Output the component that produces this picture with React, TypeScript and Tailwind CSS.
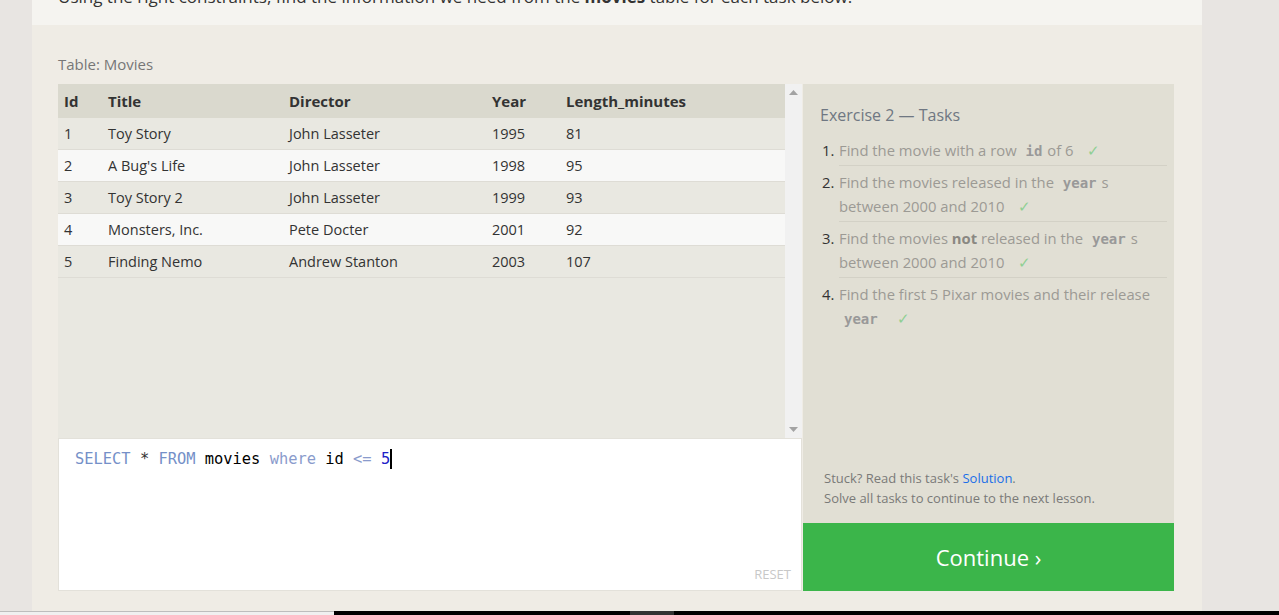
import React from "react";

const rows = [
  ["1", "Toy Story", "John Lasseter", "1995", "81"],
  ["2", "A Bug's Life", "John Lasseter", "1998", "95"],
  ["3", "Toy Story 2", "John Lasseter", "1999", "93"],
  ["4", "Monsters, Inc.", "Pete Docter", "2001", "92"],
  ["5", "Finding Nemo", "Andrew Stanton", "2003", "107"],
];

function Code({ children }: { children: React.ReactNode }) {
  return (
    <span className="font-['DejaVu_Sans_Mono',monospace] font-bold text-[14px] leading-none text-[#999] px-[5px]">
      {children}
    </span>
  );
}

function Check() {
  return <span className="text-[#8fcf93] ml-[10px] leading-none">✓</span>;
}

function Task({ n, children, last }: { n: number; children: React.ReactNode; last?: boolean }) {
  return (
    <li className="flex">
      <span className="w-[17px] shrink-0 text-[#333] pt-[4px]">{n}.</span>
      <div className={"flex-1 pt-[4px] pb-[3px] text-[#9c9a94] " + (last ? "" : "border-b border-[#d3d1c6]")}>
        {children}
      </div>
    </li>
  );
}

export default function App() {
  return (
    <div className="w-[1279px] h-[615px] overflow-hidden bg-[#e8e5e2] flex flex-col font-['Open_Sans',sans-serif]">
      <div className="flex-1 flex min-h-0">
        <div className="ml-[32px] w-[1170px] bg-[#efece5] flex flex-col">
          <div className="h-[25px] bg-[#f5f4f0] overflow-hidden px-[26px]">
            <p className="-mt-[16px] text-[17px] text-[#333] whitespace-nowrap">
              Using the right constraints, find the information we need from the <b>movies</b> table for each task below.
            </p>
          </div>
          <div className="pl-[26px] pr-[28px] pt-[29px] pb-[20px] flex-1 flex flex-col">
            <div className="text-[15px] leading-[20px] text-[#777]">Table: Movies</div>
            <div className="mt-[10px] flex gap-[1px]">
              {/* left column */}
              <div className="w-[744px] flex flex-col">
                <div className="h-[354px] bg-[#e9e8e1] flex">
                  <div className="flex-1 text-[#333]">
                    <div className="flex h-[34px] items-center bg-[#dad9ce] font-bold text-[15px]">
                      <div className="w-[44px] pl-[6px]">Id</div>
                      <div className="w-[181px] pl-[6px]">Title</div>
                      <div className="w-[203px] pl-[6px]">Director</div>
                      <div className="w-[74px] pl-[6px]">Year</div>
                      <div className="flex-1 pl-[6px]">Length_minutes</div>
                    </div>
                    {rows.map((r, i) => (
                      <div
                        key={i}
                        className={
                          "flex h-[32px] pt-[1px] items-center text-[14.5px] border-b border-[#dedcd5] " +
                          (i % 2 === 1 ? "bg-[#f8f8f7]" : "bg-[#e9e8e1]")
                        }
                      >
                        <div className="w-[44px] pl-[6px]">{r[0]}</div>
                        <div className="w-[181px] pl-[6px]">{r[1]}</div>
                        <div className="w-[203px] pl-[6px]">{r[2]}</div>
                        <div className="w-[74px] pl-[6px]">{r[3]}</div>
                        <div className="flex-1 pl-[6px]">{r[4]}</div>
                      </div>
                    ))}
                  </div>
                  <div className="w-[17px] bg-[#f1f1f1] flex flex-col justify-between items-center py-[6px]">
                    <svg width="9" height="5" viewBox="0 0 9 5"><path d="M4.5 0L9 5H0z" fill="#a3a3a3" /></svg>
                    <svg width="9" height="5" viewBox="0 0 9 5"><path d="M0 0h9L4.5 5z" fill="#a3a3a3" /></svg>
                  </div>
                </div>
                <div className="h-[153px] bg-white border border-[#e3e1da] flex flex-col pl-[16px] pr-[10px] pt-[9px] pb-[8px]">
                  <div className="font-['DejaVu_Sans_Mono',monospace] text-[15.4px] leading-[22px] flex items-center">
                    <span className="text-[#7590c8]">SELECT</span>
                    <span className="whitespace-pre text-[#333]"> * </span>
                    <span className="text-[#7590c8]">FROM</span>
                    <span className="whitespace-pre text-black"> movies </span>
                    <span className="text-[#8a9bcc]">where</span>
                    <span className="whitespace-pre text-black"> id </span>
                    <span className="text-[#8a9bcc]">&lt;=</span>
                    <span className="whitespace-pre"> </span>
                    <span className="text-[#2020c8]">5</span>
                    <span className="inline-block w-[2px] h-[20px] bg-black"></span>
                  </div>
                  <div className="mt-auto self-end text-[13px] text-[#c8c8c8] leading-[16px]">RESET</div>
                </div>
              </div>
              {/* right column */}
              <div className="flex-1 flex flex-col">
                <div className="h-[439px] bg-[#e1dfd4] flex flex-col pl-[17px] pr-[7px] pt-[20px] pb-[15px]">
                  <div className="text-[16px] leading-[22px] text-[#6f7782]">Exercise 2 — Tasks</div>
                  <ol className="mt-[8px] text-[14.8px] leading-[24px] pl-[2px]">
                    <Task n={1}>
                      Find the movie with a row <Code>id</Code>of 6 <Check />
                    </Task>
                    <Task n={2}>
                      Find the movies released in the <Code>year</Code>s between 2000 and 2010 <Check />
                    </Task>
                    <Task n={3}>
                      Find the movies <b className="text-[#8a8882]">not</b> released in the <Code>year</Code>s between 2000 and 2010 <Check />
                    </Task>
                    <Task n={4} last>
                      Find the first 5 Pixar movies and their release <Code>year</Code> <Check />
                    </Task>
                  </ol>
                  <div className="mt-auto pl-[4px] text-[13px] leading-[20px] text-[#7a7a78]">
                    <div>
                      Stuck? Read this task's <span className="text-[#1a6ee8]">Solution</span>.
                    </div>
                    <div>Solve all tasks to continue to the next lesson.</div>
                  </div>
                </div>
                <div className="h-[68px] bg-[#3bb54a] flex items-center justify-center text-white text-[22px]">
                  Continue ›
                </div>
              </div>
            </div>
          </div>
        </div>
      </div>
      <div className="h-[4px] flex shrink-0">
        <div className="w-[334px] bg-[#f0f0f0] border-t border-[#bdbdbd]"></div>
        <div className="w-[296px] bg-black"></div>
        <div className="w-[44px] bg-[#333]"></div>
        <div className="flex-1 bg-black"></div>
      </div>
    </div>
  );
}
